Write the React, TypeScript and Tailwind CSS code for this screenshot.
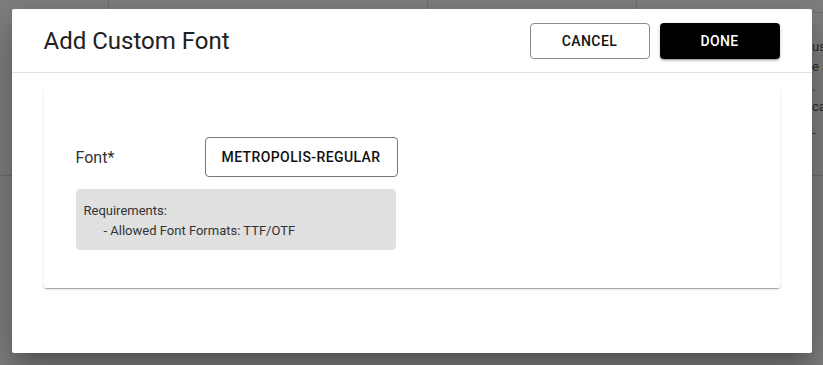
import React from "react"

const font = { fontFamily: "Roboto, 'Noto Sans', sans-serif" }

// Page behind the dialog (mostly covered)
function BackgroundPage() {
  return (
    <div className="flex h-[365px] w-full flex-col bg-white text-[#212121]">
      <div className="flex h-[12px] shrink-0">
        <div className="w-[109px] border-r border-[#dcdcdc]" />
        <div className="w-[319px] border-r border-[#dcdcdc]" />
        <div className="w-[209px] border-r border-[#dcdcdc]" />
        <div className="flex-1" />
      </div>
      <div className="flex h-[164px] shrink-0 border-b border-[#dcdcdc]">
        <div className="flex-1" />
        <div className="flex w-[11px] flex-col overflow-hidden whitespace-nowrap border-t border-[#dcdcdc] pt-[24px] text-[13px] leading-[20px] text-[#555]">
          <span>us</span>
          <span>e a</span>
          <span className="text-[#777]">.</span>
          <span>cal</span>
          <span className="mt-[6px] text-[#777]">-</span>
        </div>
      </div>
      <div className="flex-1" />
    </div>
  )
}

export default function App() {
  return (
    <div className="relative h-[365px] w-full overflow-hidden" style={font}>
      <BackgroundPage />
      <div className="absolute inset-0 bg-black/50" />

      {/* Dialog */}
      <div className="absolute inset-0 flex justify-center pt-[9px]">
        <div className="flex h-[344px] w-[800px] flex-col rounded-[2px] bg-white shadow-[0_11px_15px_-7px_rgba(0,0,0,0.2),0_24px_38px_3px_rgba(0,0,0,0.14),0_9px_46px_8px_rgba(0,0,0,0.12)]">
          <div className="flex h-[64px] shrink-0 items-center justify-between border-b border-[#e0e0e0] px-[32px]">
            <h2 className="pt-[1px] text-[24px] font-normal leading-[32px] text-[#212121]">
              Add Custom Font
            </h2>
            <div className="flex items-center gap-[10px]">
              <button className="flex h-[36px] w-[120px] items-center justify-center rounded-[4px] border border-[#8a8a8a] bg-white pt-[1px] text-[14px] font-medium tracking-[0.4px] text-[#111]">
                CANCEL
              </button>
              <button className="flex h-[36px] w-[120px] items-center justify-center rounded-[4px] bg-black pt-[1px] text-[14px] font-medium tracking-[0.4px] text-white shadow-[0_3px_1px_-2px_rgba(0,0,0,0.2),0_2px_2px_0_rgba(0,0,0,0.14),0_1px_5px_0_rgba(0,0,0,0.12)]">
                DONE
              </button>
            </div>
          </div>

          <div className="px-[32px] pt-[16px]">
            <div className="h-[199px] rounded-[2px] bg-white px-[32px] pt-[48px] shadow-[0_2px_1px_-1px_rgba(0,0,0,0.2),0_1px_1px_0_rgba(0,0,0,0.14),0_1px_3px_0_rgba(0,0,0,0.12)]">
              <div className="flex items-center">
                <span className="w-[129px] pt-[1px] text-[16px] leading-[24px] text-[#333]">Font*</span>
                <button className="flex h-[40px] items-center rounded-[4px] border border-[#777] bg-white px-[16px] text-[14px] font-medium tracking-[0.4px] text-[#111]">
                  METROPOLIS-REGULAR
                </button>
              </div>
              <div className="mt-[12px] h-[61px] w-[320px] rounded-[4px] bg-[#e0e0e0] px-[8px] pt-[12px] text-[13px] leading-[20px] text-[#333]">
                <div>Requirements:</div>
                <div className="pl-[20px]">- Allowed Font Formats: TTF/OTF</div>
              </div>
            </div>
          </div>
        </div>
      </div>
    </div>
  )
}
